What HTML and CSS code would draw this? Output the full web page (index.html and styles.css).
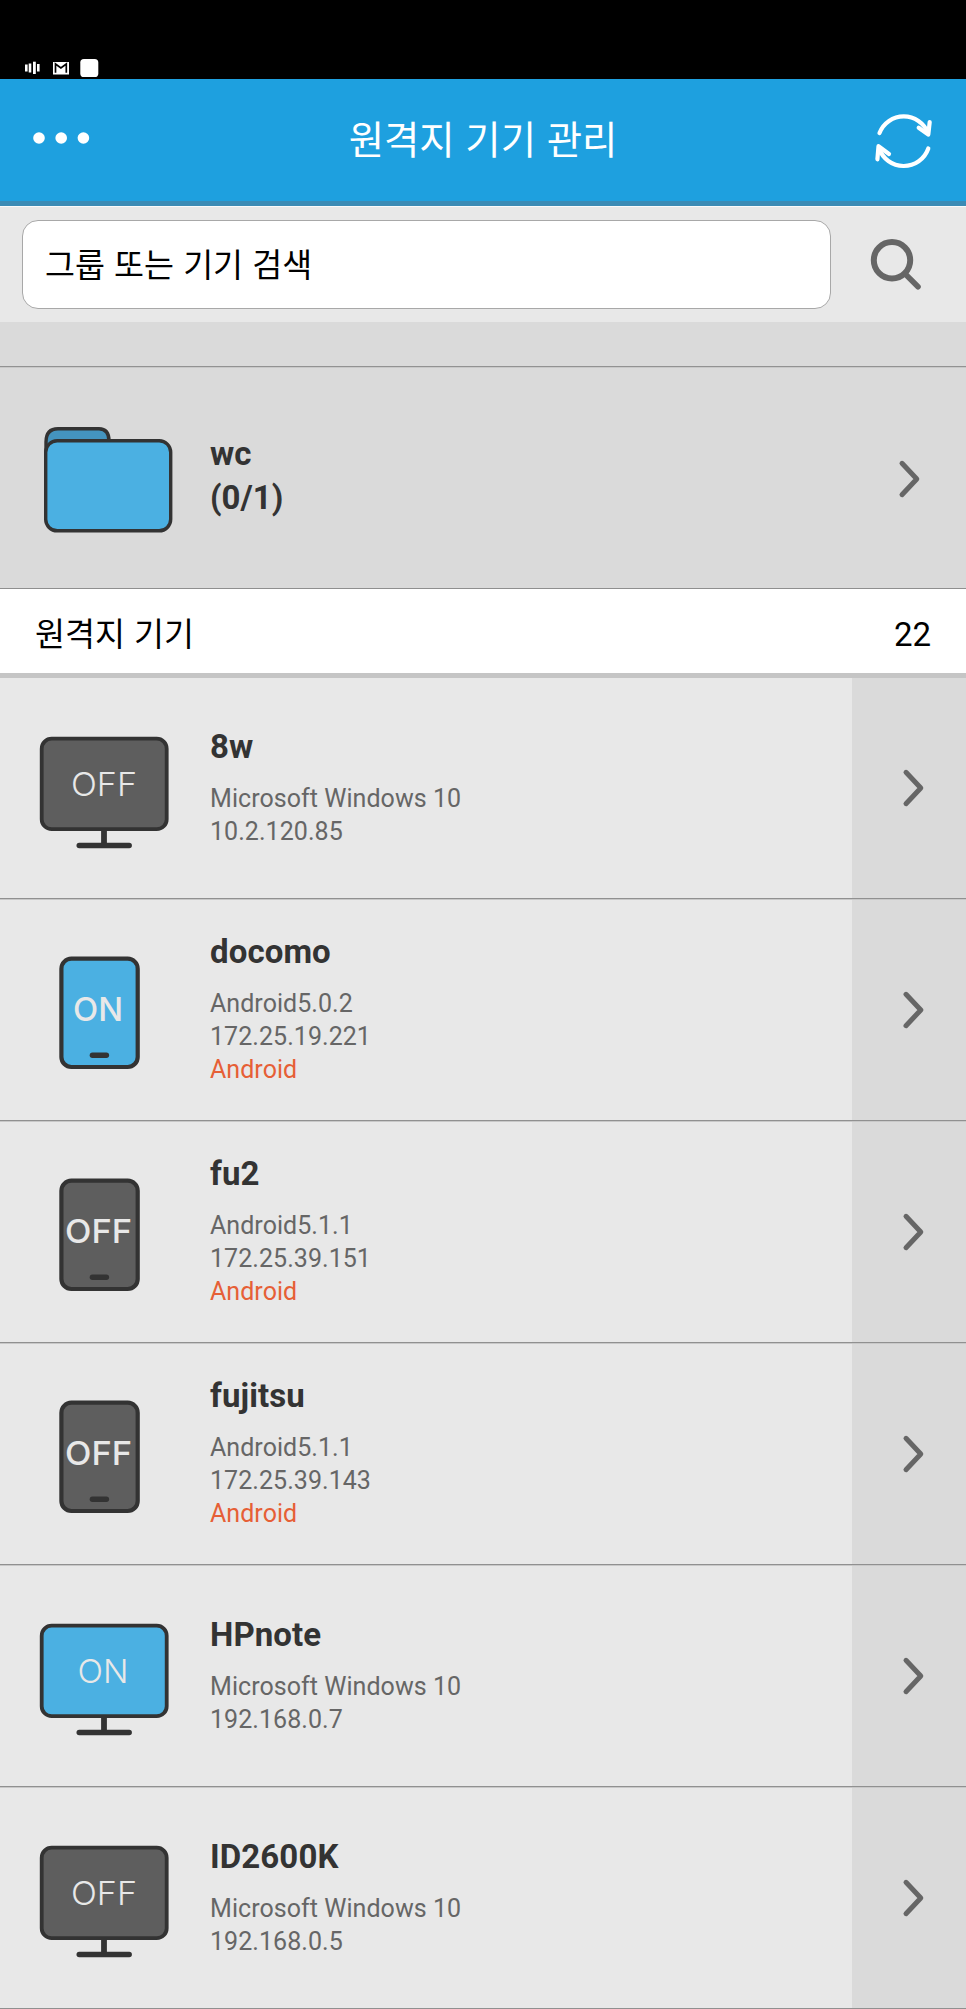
FILE: index.html
```html
<!DOCTYPE html>
<html lang="ko">
<head>
<meta charset="utf-8">
<title>원격지 기기 관리</title>
<link rel="stylesheet" href="styles.css">
</head>
<body>
<svg class="defs" width="0" height="0" aria-hidden="true">
  <symbol id="monitor" viewBox="0 0 210 221">
    <rect x="41.7" y="60.7" width="125" height="90.5" rx="10" stroke="#333" stroke-width="3.8"/>
    <path d="M104 152v15" stroke="#333" stroke-width="5.8"/>
    <path d="M79.2 167.5h50" stroke="#333" stroke-width="5.4" stroke-linecap="round"/>
  </symbol>
  <symbol id="phone" viewBox="0 0 210 221">
    <rect x="61.4" y="59.7" width="76.3" height="108.3" rx="10" stroke="#333" stroke-width="4.2"/>
    <path d="M92.4 156.3h14" stroke="#333" stroke-width="5.4" stroke-linecap="round"/>
  </symbol>
  <symbol id="chevron" viewBox="0 0 24 40"><path d="M4 4.3 18.8 20 4 35.7" fill="none" stroke="#666" stroke-width="5" stroke-linecap="round" stroke-linejoin="round"/></symbol>
</svg>

<div class="status">
  <svg width="120" height="30" viewBox="0 0 120 30">
    <g fill="#fff"><rect x="25" y="14.5" width="2.6" height="7"/><rect x="28.7" y="13.5" width="2.6" height="9"/><rect x="33" y="11.7" width="2.8" height="12.3"/><rect x="37" y="14" width="2.6" height="7.5"/><rect x="53" y="12" width="16" height="12.5"/><rect x="80.3" y="9" width="18" height="18" rx="3.6"/></g>
    <path d="M55.5 22.7V14l5.4 4 5.4-4v8.7" fill="none" stroke="#000" stroke-width="1.7"/>
  </svg>
</div>

<header class="header">
  <svg class="menu" width="58" height="14" viewBox="0 0 58 14" fill="#fff"><circle cx="6" cy="7" r="5.8"/><circle cx="28.2" cy="7" r="5.8"/><circle cx="50.4" cy="7" r="5.8"/></svg>
  <h1 class="title">원격지 기기 관리</h1>
  <svg class="refresh" width="60" height="60" viewBox="0 0 60 60" fill="none" stroke="#fff" stroke-width="4.2" stroke-linecap="round" stroke-linejoin="round">
    <path d="M5.500 22A26 26 0 0 1 54 22"/><path d="M55.700 11 54.300 23.600 44.700 16.800"/>
    <path d="M54.300 37.500A26 26 0 0 1 5 37"/><path d="M3.400 48.300 4.500 35.200 15 43"/>
  </svg>
</header>

<section class="search">
  <div class="field">그룹 또는 기기 검색</div>
  <svg width="54" height="54" viewBox="0 0 54 54" fill="none" stroke="#666" stroke-linecap="round"><circle cx="22" cy="22.300" r="18.200" stroke-width="6"/><path d="M36 36.800 48 48.800" stroke-width="5.600"/></svg>
</section>

<div class="spacer"></div>

<section class="group">
  <svg class="icon" width="210" height="221" viewBox="0 0 210 221">
    <path d="M46 90V75Q46 61.700 58 61.700H99Q109 61.700 109 74" fill="#4494bf" stroke="#333" stroke-width="3.400"/>
    <rect x="45.700" y="73.800" width="125" height="90" rx="11.500" fill="#4bb0e2" stroke="#333" stroke-width="3.400"/>
  </svg>
  <div class="group-name">wc<br>(0/1)</div>
  <svg class="chev" width="24" height="40"><use href="#chevron"/></svg>
</section>

<section class="heading"><span>원격지 기기</span><span class="count">22</span></section>

<main class="list">
  <article class="row">
    <svg class="icon off" width="210" height="221"><use href="#monitor"/><text class="thin" x="71" y="117.800" textLength="66" lengthAdjust="spacingAndGlyphs">OFF</text></svg>
    <div class="info"><h2>8w</h2><p>Microsoft Windows 10</p><p>10.2.120.85</p></div>
    <div class="go"><svg class="chev" width="24" height="40"><use href="#chevron"/></svg></div>
  </article>
  <article class="row">
    <svg class="icon on" width="210" height="221"><use href="#phone"/><text class="thick" x="73" y="121.800" textLength="50" lengthAdjust="spacingAndGlyphs">ON</text></svg>
    <div class="info"><h2>docomo</h2><p>Android5.0.2</p><p>172.25.19.221</p><p class="tag">Android</p></div>
    <div class="go"><svg class="chev" width="24" height="40"><use href="#chevron"/></svg></div>
  </article>
  <article class="row">
    <svg class="icon off" width="210" height="221"><use href="#phone"/><text class="thick" x="65" y="121.800" textLength="67" lengthAdjust="spacingAndGlyphs">OFF</text></svg>
    <div class="info"><h2>fu2</h2><p>Android5.1.1</p><p>172.25.39.151</p><p class="tag">Android</p></div>
    <div class="go"><svg class="chev" width="24" height="40"><use href="#chevron"/></svg></div>
  </article>
  <article class="row">
    <svg class="icon off" width="210" height="221"><use href="#phone"/><text class="thick" x="65" y="121.800" textLength="67" lengthAdjust="spacingAndGlyphs">OFF</text></svg>
    <div class="info"><h2>fujitsu</h2><p>Android5.1.1</p><p>172.25.39.143</p><p class="tag">Android</p></div>
    <div class="go"><svg class="chev" width="24" height="40"><use href="#chevron"/></svg></div>
  </article>
  <article class="row">
    <svg class="icon on" width="210" height="221"><use href="#monitor"/><text class="thin" x="77.500" y="117.800" textLength="51" lengthAdjust="spacingAndGlyphs">ON</text></svg>
    <div class="info"><h2>HPnote</h2><p>Microsoft Windows 10</p><p>192.168.0.7</p></div>
    <div class="go"><svg class="chev" width="24" height="40"><use href="#chevron"/></svg></div>
  </article>
  <article class="row">
    <svg class="icon off" width="210" height="221"><use href="#monitor"/><text class="thin" x="71" y="117.800" textLength="66" lengthAdjust="spacingAndGlyphs">OFF</text></svg>
    <div class="info"><h2>ID2600K</h2><p>Microsoft Windows 10</p><p>192.168.0.5</p></div>
    <div class="go"><svg class="chev" width="24" height="40"><use href="#chevron"/></svg></div>
  </article>
</main>
</body>
</html>
```
FILE: styles.css
```css
* { box-sizing: border-box; margin: 0; padding: 0; }
body { width: 966px; height: 2009px; overflow: hidden; background: #e8e8e8; font-family: Roboto, "Noto Sans CJK KR", sans-serif; color: #333; }
svg { display: block; flex: none; }
.defs { position: absolute; }
.status { height: 79px; padding-top: 50px; background: #000; }
.header { height: 127px; display: flex; align-items: center; justify-content: space-between; padding: 1px 32px 6px 33px; background: #1ea0df; border-bottom: 5px solid #3b8bb5; }
.title { flex: 1; padding: 0 0 2px 1px; text-align: center; font-family: "Noto Sans CJK KR", sans-serif; font-weight: 400; font-size: 38.400px; line-height: 58px; color: #fff; }
.menu { margin-bottom: -1px; }
.refresh { margin-bottom: -7px; }
.search { height: 116px; display: flex; align-items: center; justify-content: space-between; padding: 0 42px 0 22px; border-top: 1px solid #fafafa; }
.field { width: 809px; height: 89px; padding-left: 22px; background: #fff; border: 1px solid #a8a8a8; border-radius: 16px; font-family: "Noto Sans CJK KR", sans-serif; font-size: 32.600px; line-height: 84px; color: #000; }
.spacer { height: 45px; background: #dadada; border-bottom: 1px solid #929292; }
.group { height: 222px; display: flex; align-items: flex-start; background: #dadada; border-top: 1px solid #c8c8c8; border-bottom: 1px solid #8f8f8f; }
.group .icon { margin-top: -1px; }
.group-name { flex: 1; padding-top: 64px; font-size: 33px; font-weight: 700; line-height: 44px; }
.group .chev { margin: 91px 44px 0 0; }
.heading { height: 89px; display: flex; align-items: center; justify-content: space-between; padding: 1px 35px 0; background: #fff; border-bottom: 5px solid #c5c5c5; font-family: "Noto Sans CJK KR", sans-serif; font-size: 32.600px; color: #000; }
.count { font-family: Roboto, sans-serif; font-size: 33px; padding-top: 6px; }
.row { height: 222px; display: flex; border-top: 1px solid #c8c8c8; border-bottom: 1px solid #909090; }
.row:first-child { height: 221px; border-top: 0; }
.row .icon { margin-top: -1px; }
.row:first-child .icon { margin-top: 0; }
.info { flex: 1; display: flex; flex-direction: column; justify-content: center; padding-bottom: 4px; }
.info h2 { font-size: 33px; font-weight: 700; line-height: 44px; margin-bottom: 13px; letter-spacing: 0.1px; }
.info p { font-size: 25px; line-height: 33px; color: #666; letter-spacing: 0.05px; }
.info .tag { color: #e65f36; }
.go { width: 114px; display: flex; align-items: center; padding: 0 0 0 50px; background: #dadada; }
.off { fill: #5e5e5e; }
.on { fill: #4bb0e2; }
.icon text { fill: #e8e8e8; font-family: Inter, sans-serif; font-size: 33px; }
.icon .thin { font-weight: 300; }
.icon .thick { font-weight: 500; }
```
